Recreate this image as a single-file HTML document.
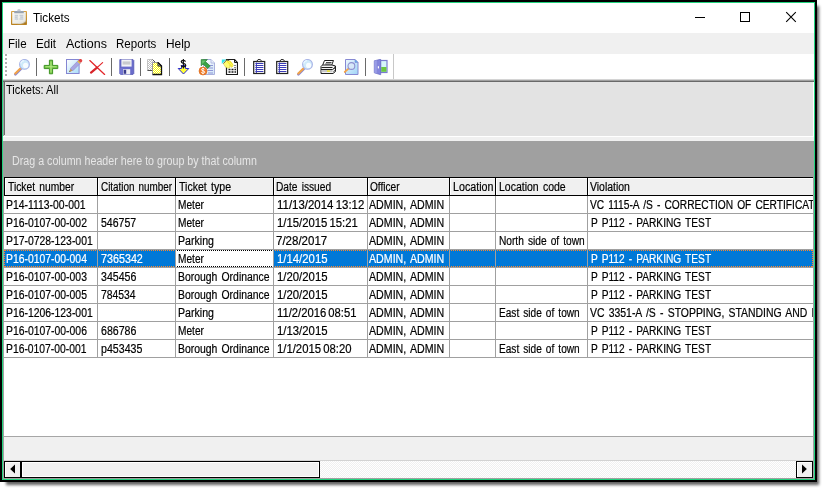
<!DOCTYPE html>
<html>
<head>
<meta charset="utf-8">
<title>Tickets</title>
<style>
html,body{margin:0;padding:0;background:#fff;}
body{width:825px;height:490px;position:relative;overflow:hidden;font-family:"Liberation Sans",sans-serif;font-size:12px;color:#000;}
.abs{position:absolute;}
#shadow{left:6px;top:6px;width:813px;height:479px;background:rgba(0,0,0,.62);filter:blur(1.7px);}
#win{left:0;top:0;width:817px;height:482px;background:#000;}
#green{left:2px;top:2px;width:813px;height:478px;background:#22d47f;}
#inner{left:3px;top:3px;width:811px;height:476px;background:#f0f0f0;overflow:hidden;}
/* coordinates inside #inner are offset by (3,3) */
#title{left:0;top:0;width:811px;height:30px;background:#fff;}
#title .t{left:29.500px;top:7px;font-size:12px;line-height:16px;transform-origin:0 50%;transform:scaleX(.975);}
#menu{left:0;top:30px;width:811px;height:21px;background:#f0f0f0;}
#menu span{position:absolute;top:4px;line-height:15px;font-size:12px;transform-origin:0 50%;white-space:nowrap;}
#tb{left:0;top:51px;width:811px;height:25px;background:#fff;}
#tbl1{left:0;top:76px;width:811px;height:1px;background:#d4d4d4;}
#tbl2{left:0;top:77px;width:811px;height:1px;background:#a0a0a0;}
#tbl3{left:0;top:78px;width:811px;height:1px;background:#696969;}
.sep{position:absolute;top:4px;width:1px;height:18px;background:#6a6a6a;}
.ico{position:absolute;top:6px;width:16px;height:16px;}
#panel{left:2px;top:79px;width:807px;height:53px;background:#e3e3e3;}
#pl1{left:0;top:79px;width:1px;height:54px;background:#a0a0a0;}
#pl2{left:1px;top:79px;width:1px;height:53px;background:#696969;}
#pb1{left:1px;top:132px;width:810px;height:1px;background:#e3e3e3;}
#pb2{left:0;top:133px;width:811px;height:1px;background:#fff;}
#pr1{left:809px;top:79px;width:1px;height:54px;background:#e3e3e3;}
#pr2{left:810px;top:79px;width:1px;height:55px;background:#fff;}
#group{left:0;top:138px;width:811px;height:36px;background:#a0a0a0;}
#group span{position:absolute;left:8.500px;top:13px;color:#e6e6e6;line-height:14px;white-space:nowrap;transform-origin:0 50%;transform:scaleX(.891);}
#grid{left:1px;top:174px;width:809px;height:259px;background:#fff;overflow:hidden;}
.hdr{position:absolute;top:0;height:17px;border:1px solid #000;background:#f0f0f0;box-shadow:inset 1px 1px 0 #fff;overflow:hidden;}
.hdr span,.c span{display:inline-block;white-space:pre;transform-origin:0 50%;transform:scaleX(.87);-webkit-text-stroke:.2px currentColor;word-spacing:1.5px;}
.hdr span{position:absolute;left:3px;top:2px;line-height:14px;}
.row{position:absolute;left:0;width:809px;height:17px;border-bottom:1px solid #a0a0a0;}
.c{position:absolute;top:0;height:17px;border-right:1px solid #a0a0a0;overflow:hidden;line-height:17px;}
.c span{position:absolute;left:3px;top:1px;line-height:16px;}
.sel .c{background:#0078d7;color:#fff;}

#lgray{left:0;top:138px;width:1px;height:338px;background:#a0a0a0;}
#rgray{left:810px;top:138px;width:1px;height:338px;background:#a0a0a0;}
#bgray{left:0;top:475px;width:811px;height:1px;background:#a0a0a0;}
#gline{left:1px;top:433px;width:809px;height:1px;background:#a6a6a6;}
#sline{left:1px;top:457px;width:809px;height:1px;background:#d2d2d2;}
#sb{left:1px;top:458px;width:809px;height:17px;background:conic-gradient(#fff 25%,#f0f0f0 0 50%,#fff 0 75%,#f0f0f0 0) 0 0/2px 2px;}
.sbb{position:absolute;top:0;width:15px;height:15px;border:1px solid #000;background:#f0f0f0;box-shadow:inset 1px 1px 0 #fff;}
.sbb svg{position:absolute;left:0;top:0;}
#thumb{position:absolute;left:17px;top:0;width:297px;height:15px;border:1px solid #000;background:#f0f0f0;box-shadow:inset 1px 1px 0 #fff,inset -1px -1px 0 #fff;}
.dot{position:absolute;height:1px;background:repeating-linear-gradient(90deg,#0078d7 0 1px,#ff8728 1px 2px);}
.dotk{position:absolute;height:1px;background:repeating-linear-gradient(90deg,#fff 0 1px,#000 1px 2px);}
.dotv{position:absolute;width:1px;background:repeating-linear-gradient(180deg,#ff8728 0 1px,#0078d7 1px 2px);}
.sel .c.foc{background:#fff;color:#000;}
</style>
</head>
<body>
<div id="shadow" class="abs"></div>
<div id="win" class="abs"></div>
<div id="green" class="abs"></div>
<div id="inner" class="abs">
  <div id="title" class="abs">
    <svg class="abs" style="left:690px;top:6px" width="112" height="16" viewBox="0 0 112 16">
      <path d="M2 8.500h10" stroke="#000" stroke-width="1"/>
      <rect x="47.500" y="3.500" width="9" height="9" fill="none" stroke="#000" stroke-width="1"/>
      <path d="M93.200 3.200l9.600 9.600M102.800 3.200l-9.600 9.600" stroke="#000" stroke-width="1.100"/>
    </svg>
    <svg class="abs" style="left:7px;top:5px" width="18" height="18" viewBox="0 0 18 18">
      <defs><linearGradient id="cbg" x1="0" y1="0" x2="0" y2="1"><stop offset="0" stop-color="#d9a548"/><stop offset="1" stop-color="#b8801e"/></linearGradient>
      <linearGradient id="cpg" x1="0" y1="0" x2="1" y2="1"><stop offset="0" stop-color="#fafaf7"/><stop offset="1" stop-color="#e4e4de"/></linearGradient></defs>
      <rect x="1" y="3" width="16" height="14" rx=".8" fill="url(#cbg)"/>
      <path d="M2.200 4h13.600v9.500c-1.500 1.600-4.500 2.300-7 2.300h-6.600z" fill="url(#cpg)"/>
      <path d="M15.800 12.200c-1.500 1.800-4.500 2.800-8.300 3.600 3.500.6 6.800-.2 8.300-1.800z" fill="#fff" stroke="#c9c6b8" stroke-width=".3"/>
      <path d="M8.300 15.800c3-.3 6-.9 7.500-3.600v3.600z" fill="#8c6418" opacity=".55"/>
      <rect x="4.200" y="3" width="9.600" height="2.300" rx=".6" fill="#98a3b0"/>
      <path d="M7.200 3.200c0-1.400.6-2.200 1.800-2.200s1.800.8 1.800 2.200z" fill="#c3cad4"/>
      <path d="M4.700 7.500h3.400M4.700 9.200h3M4.700 11h3.400M9.500 7.500h3.800M9.500 11h3.800M10.200 9.200h3" stroke="#c6ced6" stroke-width="1.400"/>
    </svg>
    <div class="abs t">Tickets</div>
  </div>
  <div id="menu" class="abs">
    <span style="left:5.300px;transform:scaleX(.96)">File</span><span style="left:32.600px;transform:scaleX(.97)">Edit</span><span style="left:63px;transform:scaleX(1.04)">Actions</span><span style="left:113.200px;transform:scaleX(.96)">Reports</span><span style="left:163.200px;transform:scaleX(.99)">Help</span>
  </div>
  <div id="tb" class="abs">
<div class="abs" style="left:2px;top:0px;width:2px;height:2px;background:#b0b0b0"></div>
<div class="abs" style="left:2px;top:4px;width:2px;height:2px;background:#b0b0b0"></div>
<div class="abs" style="left:2px;top:8px;width:2px;height:2px;background:#b0b0b0"></div>
<div class="abs" style="left:2px;top:12px;width:2px;height:2px;background:#b0b0b0"></div>
<div class="abs" style="left:2px;top:16px;width:2px;height:2px;background:#b0b0b0"></div>
<div class="abs" style="left:2px;top:20px;width:2px;height:2px;background:#b0b0b0"></div>
<div class="sep" style="left:33px"></div>
<div class="sep" style="left:108px"></div>
<div class="sep" style="left:137px"></div>
<div class="sep" style="left:166px"></div>
<div class="sep" style="left:241px"></div>
<div class="sep" style="left:362px"></div>
<svg class="abs" style="left:11px;top:5px" width="17" height="17" viewBox="0 0 17 17"><line x1="1.4" y1="15.3" x2="6.6" y2="10.1" stroke="#8a88d0" stroke-width="2.6" stroke-linecap="round"/>
<line x1="1.3" y1="14.6" x2="6.4" y2="9.5" stroke="#f3a348" stroke-width="2.1" stroke-linecap="round"/>
<circle cx="10.5" cy="5.4" r="4.9" fill="#cfeafa" stroke="#a9b4e6" stroke-width="1.1"/>
<circle cx="11.6" cy="6.4" r="2.6" fill="#ffffff" opacity=".85"/>
<path d="M6.6 4.6a4 4 0 0 1 3.4-3" stroke="#e8f6ff" stroke-width="1.2" fill="none"/></svg>
<svg class="abs" style="left:40px;top:5px" width="17" height="17" viewBox="0 0 17 17"><path d="M6.4 1.2h3.2v5.2h5.2v3.2h-5.2v5.2h-3.2v-5.2h-5.2v-3.2h5.2z" fill="#6fc13f" stroke="#3f9423" stroke-width="1" stroke-linejoin="round"/>
<path d="M8 2.4v11.2M2.4 7.7h11.2" stroke="#b4ea86" stroke-width="1.1" fill="none"/></svg>
<svg class="abs" style="left:63px;top:5px" width="17" height="17" viewBox="0 0 17 17"><defs><linearGradient id="eg" x1="0" y1="0" x2="1" y2="1"><stop offset="0" stop-color="#ffffff"/><stop offset="1" stop-color="#a8dcf8"/></linearGradient></defs>
<rect x="0.5" y="0.5" width="12.6" height="14" fill="url(#eg)" stroke="#8486d2" stroke-width="1"/>
<path d="M3.2 13l1.2-3.6 2.4 2.4z" fill="#c49a58"/>
<path d="M4.4 9.4l7.8-7.8 2.4 2.4-7.8 7.8z" fill="#a9a6e2" stroke="#7f7cc4" stroke-width=".5"/>
<path d="M11.4 2.4l.8-.8 2.4 2.4-.8.8z" fill="#f2c62a"/>
<path d="M12.4 1.4l.9-.9a1.6 1.6 0 0 1 2.4 2.4l-.9.9z" fill="#e24444"/>
<path d="M3.2 13l.5-1.4.9.9z" fill="#5a4a2a"/></svg>
<svg class="abs" style="left:86px;top:5px" width="17" height="17" viewBox="0 0 17 17"><line x1=".8" y1="1.6" x2="15.6" y2="15.4" stroke="#e3262a" stroke-width="1.3" stroke-linecap="round"/>
<line x1="13.6" y1="3.6" x2="8" y2="8.6" stroke="#e3262a" stroke-width="1.2" stroke-linecap="round"/>
<line x1="8" y1="8.6" x2="2" y2="13.6" stroke="#d8242a" stroke-width="2.2" stroke-linecap="round"/></svg>
<svg class="abs" style="left:115px;top:5px" width="17" height="17" viewBox="0 0 17 17"><path d="M1.8 0.6h13.2l.8.8v13.2l-.8.8H2.6l-.8-.8z" fill="#6a6ccb" stroke="#5658b4" stroke-width=".8"/>
<rect x="3.4" y="0.6" width="10.2" height="7" fill="#f4f4f6"/>
<rect x="4.6" y="2.4" width="7.8" height="3.2" fill="#c9cace"/>
<rect x="5" y="10.2" width="7.2" height="5.2" fill="#f2f2f6"/>
<rect x="5.6" y="10.8" width="2.6" height="4" fill="#3a3c8c"/>
<path d="M1.8 9l3-0v6.4h-2.2l-.8-.8z" fill="#7c7ed6" opacity=".6"/></svg>
<svg class="abs" style="left:143px;top:5px" width="17" height="17" viewBox="0 0 17 17"><defs><pattern id="dg" width="2" height="2" patternUnits="userSpaceOnUse"><rect width="2" height="2" fill="#fff"/><rect width="1" height="1" fill="#c0c0c0"/><rect x="1" y="1" width="1" height="1" fill="#c0c0c0"/></pattern>
<pattern id="dy" width="2" height="2" patternUnits="userSpaceOnUse"><rect width="2" height="2" fill="#fff"/><rect width="1" height="1" fill="#ffff00"/><rect x="1" y="1" width="1" height="1" fill="#ffff00"/></pattern></defs>
<path d="M1.500 .500h5l3 3v8h-8z" fill="url(#dg)"/>
<path d="M1.500 11.500v-11h5" fill="none" stroke="#c4c4c4" stroke-width="1"/>
<path d="M6.500 .500l3 3v8h-8" fill="none" stroke="#505050" stroke-width="1"/>
<path d="M6.500 3.500h5.500l3.500 3.500v8.500h-9z" fill="url(#dy)"/>
<path d="M6.500 15.500v-12h5.500" fill="none" stroke="#9a9a9a" stroke-width="1"/>
<path d="M12 3.500v3.500h3.500z" fill="#fff" stroke="#111" stroke-width="1" stroke-linejoin="round"/>
<path d="M12 3.500l3.500 3.500v8.500h-9" fill="none" stroke="#111" stroke-width="1.300"/></svg>
<svg class="abs" style="left:172px;top:5px" width="17" height="17" viewBox="0 0 17 17"><path d="M6.500 6.500h4v3h3.300l-5.300 5.500-5.300-5.500h3.300z" fill="#ffff38" stroke="#2a2ad0" stroke-width="1" stroke-linejoin="miter"/>
<path d="M10.500 2.600c-.3-.9-1.100-1.300-2.100-1.300-1.200 0-2.100.6-2.100 1.500 0 2.200 4.400 1.100 4.400 3.400 0 1-1 1.600-2.300 1.600-1.100 0-2-.5-2.300-1.400" fill="none" stroke="#111" stroke-width="1.300"/>
<path d="M8.400 0v9.500" stroke="#111" stroke-width="1.100"/></svg>
<svg class="abs" style="left:195px;top:5px" width="17" height="17" viewBox="0 0 17 17"><defs><linearGradient id="dsg" x1="0" y1="0" x2="1" y2="1"><stop offset="0" stop-color="#ffffff"/><stop offset="1" stop-color="#cfe4f8"/></linearGradient></defs>
<path d="M5.500 .5h7.500l3.500 3.500v11.500h-11z" fill="url(#dsg)" stroke="#a9b0dc" stroke-width="1"/>
<path d="M13 .5v3.500h3.500" fill="#e8f0fc" stroke="#a9b0dc" stroke-width=".8"/>
<path d="M9 6.500h6M9 9h6M9.500 11.500h5.500M10 14h5" stroke="#8d96d6" stroke-width="1.100"/>
<path d="M3.200 .6h6.200l-2 2 4.800 4.400-2.600 2.600-4.600-4.600-1.800 1.800z" fill="#3aa346" stroke="#2b7d36" stroke-width=".7"/>
<path d="M4.200 1.400h3.600l-3.600 3.600z" fill="#7ed27e" opacity=".7"/>
<circle cx="5" cy="12" r="4" fill="#ef7b28" stroke="#d96a1c" stroke-width=".6"/>
<path d="M6.600 10.400c-.3-.7-.9-.9-1.600-.9-.9 0-1.500.5-1.500 1.200 0 1.600 3.200.8 3.200 2.400 0 .8-.7 1.200-1.700 1.200-.8 0-1.500-.3-1.700-1" fill="none" stroke="#fff" stroke-width="1"/>
<path d="M5 8.800v6.400" stroke="#fff" stroke-width=".8"/></svg>
<svg class="abs" style="left:218px;top:5px" width="17" height="17" viewBox="0 0 17 17"><path d="M5.500 .5h8l3 3v12h-11z" fill="#fff" stroke="#1a1a1a" stroke-width="1.200"/>
<path d="M13.500 .5v3h3" fill="none" stroke="#1a1a1a" stroke-width="1"/>
<path d="M7.500 10.500h2M10.500 10.500h2M13.500 10.500h1.500M7.500 13h2M10.500 13h2M13.500 13h1.500" stroke="#1a1a1a" stroke-width="1.300"/>
<path d="M13.500 6.500h1M13.500 8.500h1" stroke="#1a1a1a" stroke-width="1"/>
<path d="M.8 .4h4.400l-4.400 4.600z" fill="#2ee6ee"/>
<path d="M2.400 4.600l3.200-3.600 2.600.6 4.200 5-1.600 1.800-2.200-2 .4 2.400-2.200.4-2.600-1.400z" fill="#fffb70" stroke="#c9c43a" stroke-width=".5"/>
<path d="M6.200 2.200l5 5.600M8.600 1.800l3.400 4" stroke="#f4e82e" stroke-width="1.200"/>
<path d="M2.400 4.600l3.200-3.600 2.600.6" fill="none" stroke="#3a3a3a" stroke-width=".7"/></svg>
<svg class="abs" style="left:248px;top:5px" width="17" height="17" viewBox="0 0 17 17"><rect x="2.700" y="2.500" width="11" height="12" fill="#fff" stroke="#222" stroke-width="1.200"/>
<path d="M5.600 2.600l1.400-2h2.400l1.400 2z" fill="#fff" stroke="#222" stroke-width="1"/>
<path d="M5.400 3.500v10.500" stroke="#3b3bb8" stroke-width="1"/>
<path d="M4.400 4.500h8M4.400 6.500h8M4.400 8.500h8M4.400 10.500h8M4.400 12.500h8" stroke="#3b3bb8" stroke-width="1.100"/></svg>
<svg class="abs" style="left:271px;top:5px" width="17" height="17" viewBox="0 0 17 17"><rect x="2.700" y="2.500" width="11" height="12" fill="#fff" stroke="#222" stroke-width="1.200"/>
<path d="M5.600 2.600l1.400-2h2.400l1.400 2z" fill="#fff" stroke="#222" stroke-width="1"/>
<path d="M5.400 3.500v10.500" stroke="#3b3bb8" stroke-width="1"/>
<path d="M4.400 4.500h8M4.400 6.500h8M4.400 8.500h8M4.400 10.500h8M4.400 12.500h8" stroke="#3b3bb8" stroke-width="1.100"/></svg>
<svg class="abs" style="left:294px;top:5px" width="17" height="17" viewBox="0 0 17 17"><line x1="1.4" y1="15.3" x2="6.6" y2="10.1" stroke="#8a88d0" stroke-width="2.6" stroke-linecap="round"/>
<line x1="1.3" y1="14.6" x2="6.4" y2="9.5" stroke="#f3a348" stroke-width="2.1" stroke-linecap="round"/>
<circle cx="10.5" cy="5.4" r="4.9" fill="#cfeafa" stroke="#a9b4e6" stroke-width="1.1"/>
<circle cx="11.6" cy="6.4" r="2.6" fill="#ffffff" opacity=".85"/>
<path d="M6.6 4.6a4 4 0 0 1 3.4-3" stroke="#e8f6ff" stroke-width="1.2" fill="none"/></svg>
<svg class="abs" style="left:317px;top:5px" width="17" height="17" viewBox="0 0 17 17"><path d="M4.500 1.500h9l-2 5h-9z" fill="#fff" stroke="#222" stroke-width="1"/>
<path d="M6 3.500h5.500M5.200 5h5.500" stroke="#333" stroke-width=".9"/>
<path d="M1 7.500l1.500-1.500h9.500l3.500 1v5.500l-2.500 2h-12z" fill="#f2f2f2" stroke="#222" stroke-width="1"/>
<path d="M1 10.500h11.500l3-2" fill="none" stroke="#222" stroke-width="1"/>
<path d="M1.500 8.500h11" stroke="#222" stroke-width="1"/>
<rect x="1.500" y="11" width="11" height="2" fill="#c9c9c9"/>
<rect x="7" y="11.400" width="3" height="1.300" fill="#f4e812"/>
<path d="M1.500 14.500h11" stroke="#222" stroke-width="1"/>
<path d="M13.500 6.500l1 .5M13.500 9.500l1.500-1M13.500 12.500l1.500-1" stroke="#222" stroke-width=".9"/></svg>
<svg class="abs" style="left:340px;top:5px" width="17" height="17" viewBox="0 0 17 17"><defs><linearGradient id="pg" x1="0" y1="0" x2="1" y2="1"><stop offset="0" stop-color="#eef8ff"/><stop offset="1" stop-color="#9fd4f6"/></linearGradient></defs>
<path d="M2.500 .5h9.500l3 3v12h-12.500z" fill="url(#pg)" stroke="#8688d2" stroke-width="1"/>
<path d="M12 .5v3h3z" fill="#58b6f0" stroke="#8688d2" stroke-width=".6"/>
<line x1="1.700" y1="13" x2="5.800" y2="9.400" stroke="#f3a348" stroke-width="1.700" stroke-linecap="round"/>
<circle cx="8.400" cy="7" r="3.400" fill="#dbe8f8" fill-opacity=".75" stroke="#8f8fd0" stroke-width="1.100"/></svg>
<svg class="abs" style="left:369px;top:5px" width="17" height="17" viewBox="0 0 17 17"><rect x="8.500" y="1.500" width="6.500" height="12" fill="#d6f6fa" stroke="#7a7cd0" stroke-width="1.200"/>
<rect x="9.200" y="8" width="5.200" height="4.800" fill="#6cc840"/>
<path d="M2.300 1.800l6.400-1.500v15.400l-6.400-1.900z" fill="#8486dc" stroke="#6c6ec8" stroke-width=".8"/>
<path d="M2.300 1.800l2.500-.6v13.300l-2.500-.7z" fill="#a4a6ea" opacity=".7"/>
<rect x="5.800" y="7.200" width="1.200" height="2.200" fill="#fff"/></svg>
<div class="abs" style="left:390px;top:0;width:1px;height:25px;background:#c8c8c8"></div>
</div>
  <div id="tbl1" class="abs"></div><div id="tbl2" class="abs"></div><div id="tbl3" class="abs"></div>
  <div id="pl1" class="abs"></div><div id="pl2" class="abs"></div><div id="pb1" class="abs"></div><div id="pb2" class="abs"></div><div id="pr1" class="abs"></div><div id="pr2" class="abs"></div>
  <div id="panel" class="abs"><span class="abs" style="left:1.400px;top:1px;line-height:14px;white-space:nowrap;transform-origin:0 50%;transform:scaleX(.92)">Tickets: All</span></div>
  <div id="group" class="abs"><span>Drag a column header here to group by that column</span></div>
  <div id="lgray" class="abs"></div><div id="rgray" class="abs"></div><div id="bgray" class="abs"></div>
  <div id="gline" class="abs"></div><div id="sline" class="abs"></div>
  <div id="sb" class="abs">
    <div class="sbb" style="left:0"><svg width="15" height="15" viewBox="0 0 15 15"><path d="M10 2.500v9l-4.800-4.500z" fill="#000"/></svg></div>
    <div id="thumb"></div>
    <div class="sbb" style="left:792px"><svg width="15" height="15" viewBox="0 0 15 15"><path d="M5 2.500v9l4.800-4.500z" fill="#000"/></svg></div>
  </div>
  <div id="grid" class="abs">
<div class="hdr" style="left:0px;width:92px"><span style="left:2.80px;transform:scaleX(0.8579)">Ticket number</span></div>
<div class="hdr" style="left:93px;width:77px"><span style="left:2.80px;transform:scaleX(0.8245)">Citation number</span></div>
<div class="hdr" style="left:171px;width:97px"><span style="left:2.80px;transform:scaleX(0.8811)">Ticket type</span></div>
<div class="hdr" style="left:269px;width:93px"><span style="left:2.00px;transform:scaleX(0.8493)">Date issued</span></div>
<div class="hdr" style="left:363px;width:81px"><span style="left:2.00px;transform:scaleX(0.8430)">Officer</span></div>
<div class="hdr" style="left:445px;width:45px"><span style="left:2.80px;transform:scaleX(0.8903)">Location</span></div>
<div class="hdr" style="left:491px;width:91px"><span style="left:2.80px;transform:scaleX(0.8748)">Location code</span></div>
<div class="hdr" style="left:583px;width:225px"><span style="left:2.00px;transform:scaleX(0.8716)">Violation</span></div>
<div class="row" style="top:19px">
<div class="c" style="left:0px;width:93px"><span style="left:2.00px;transform:scaleX(0.8677)">P14-1113-00-001</span></div>
<div class="c" style="left:94px;width:77px"></div>
<div class="c" style="left:172px;width:97px"><span style="left:2.00px;transform:scaleX(0.8436)">Meter</span></div>
<div class="c" style="left:270px;width:93px"><span style="word-spacing:-1px;left:2.64px;transform:scaleX(0.9536)">11/13/2014 13:12</span></div>
<div class="c" style="left:364px;width:81px"><span style="left:1.20px;transform:scaleX(0.8872)">ADMIN, ADMIN</span></div>
<div class="c" style="left:446px;width:45px"></div>
<div class="c" style="left:492px;width:91px"></div>
<div class="c" style="left:584px;width:225px"><span style="left:2.00px;transform:scaleX(0.8501)">VC 1115-A /S - CORRECTION OF CERTIFICATE</span></div>
</div>
<div class="row" style="top:37px">
<div class="c" style="left:0px;width:93px"><span style="left:2.00px;transform:scaleX(0.8663)">P16-0107-00-002</span></div>
<div class="c" style="left:94px;width:77px"><span style="left:2.80px;transform:scaleX(0.8758)">546757</span></div>
<div class="c" style="left:172px;width:97px"><span style="left:2.00px;transform:scaleX(0.8436)">Meter</span></div>
<div class="c" style="left:270px;width:93px"><span style="word-spacing:-1px;left:2.64px;transform:scaleX(0.9425)">1/15/2015 15:21</span></div>
<div class="c" style="left:364px;width:81px"><span style="left:1.20px;transform:scaleX(0.8872)">ADMIN, ADMIN</span></div>
<div class="c" style="left:446px;width:45px"></div>
<div class="c" style="left:492px;width:91px"></div>
<div class="c" style="left:584px;width:225px"><span style="left:2.80px;transform:scaleX(0.8467)">P P112 - PARKING TEST</span></div>
</div>
<div class="row" style="top:55px">
<div class="c" style="left:0px;width:93px"><span style="left:2.00px;transform:scaleX(0.8665)">P17-0728-123-001</span></div>
<div class="c" style="left:94px;width:77px"></div>
<div class="c" style="left:172px;width:97px"><span style="left:2.00px;transform:scaleX(0.8842)">Parking</span></div>
<div class="c" style="left:270px;width:93px"><span style="word-spacing:-1px;left:2.00px;transform:scaleX(0.9596)">7/28/2017</span></div>
<div class="c" style="left:364px;width:81px"><span style="left:1.20px;transform:scaleX(0.8872)">ADMIN, ADMIN</span></div>
<div class="c" style="left:446px;width:45px"></div>
<div class="c" style="left:492px;width:91px"><span style="left:2.80px;transform:scaleX(0.8462)">North side of town</span></div>
<div class="c" style="left:584px;width:225px"></div>
</div>
<div class="row sel" style="top:73px">
<div class="c" style="left:0px;width:93px"><span style="left:2.00px;transform:scaleX(0.8663)">P16-0107-00-004</span></div>
<div class="c" style="left:94px;width:77px"><span style="left:2.80px;transform:scaleX(0.8956)">7365342</span></div>
<div class="c foc" style="left:172px;width:97px"><span style="left:2.00px;transform:scaleX(0.8436)">Meter</span></div>
<div class="c" style="left:270px;width:93px"><span style="word-spacing:-1px;left:2.64px;transform:scaleX(0.9470)">1/14/2015</span></div>
<div class="c" style="left:364px;width:81px"><span style="left:1.20px;transform:scaleX(0.8872)">ADMIN, ADMIN</span></div>
<div class="c" style="left:446px;width:45px"></div>
<div class="c" style="left:492px;width:91px"></div>
<div class="c" style="left:584px;width:225px"><span style="left:2.80px;transform:scaleX(0.8467)">P P112 - PARKING TEST</span></div>
</div>
<div class="row" style="top:91px">
<div class="c" style="left:0px;width:93px"><span style="left:2.00px;transform:scaleX(0.8663)">P16-0107-00-003</span></div>
<div class="c" style="left:94px;width:77px"><span style="left:2.80px;transform:scaleX(0.8839)">345456</span></div>
<div class="c" style="left:172px;width:97px"><span style="left:2.00px;transform:scaleX(0.8671)">Borough Ordinance</span></div>
<div class="c" style="left:270px;width:93px"><span style="word-spacing:-1px;left:2.64px;transform:scaleX(0.9470)">1/20/2015</span></div>
<div class="c" style="left:364px;width:81px"><span style="left:1.20px;transform:scaleX(0.8872)">ADMIN, ADMIN</span></div>
<div class="c" style="left:446px;width:45px"></div>
<div class="c" style="left:492px;width:91px"></div>
<div class="c" style="left:584px;width:225px"><span style="left:2.80px;transform:scaleX(0.8467)">P P112 - PARKING TEST</span></div>
</div>
<div class="row" style="top:109px">
<div class="c" style="left:0px;width:93px"><span style="left:2.00px;transform:scaleX(0.8663)">P16-0107-00-005</span></div>
<div class="c" style="left:94px;width:77px"><span style="left:2.80px;transform:scaleX(0.8642)">784534</span></div>
<div class="c" style="left:172px;width:97px"><span style="left:2.00px;transform:scaleX(0.8671)">Borough Ordinance</span></div>
<div class="c" style="left:270px;width:93px"><span style="word-spacing:-1px;left:2.64px;transform:scaleX(0.9470)">1/20/2015</span></div>
<div class="c" style="left:364px;width:81px"><span style="left:1.20px;transform:scaleX(0.8872)">ADMIN, ADMIN</span></div>
<div class="c" style="left:446px;width:45px"></div>
<div class="c" style="left:492px;width:91px"></div>
<div class="c" style="left:584px;width:225px"><span style="left:2.80px;transform:scaleX(0.8467)">P P112 - PARKING TEST</span></div>
</div>
<div class="row" style="top:127px">
<div class="c" style="left:0px;width:93px"><span style="left:2.00px;transform:scaleX(0.8665)">P16-1206-123-001</span></div>
<div class="c" style="left:94px;width:77px"></div>
<div class="c" style="left:172px;width:97px"><span style="left:2.00px;transform:scaleX(0.8842)">Parking</span></div>
<div class="c" style="left:270px;width:93px"><span style="word-spacing:-1px;left:2.64px;transform:scaleX(0.9367)">11/2/2016 08:51</span></div>
<div class="c" style="left:364px;width:81px"><span style="left:1.20px;transform:scaleX(0.8872)">ADMIN, ADMIN</span></div>
<div class="c" style="left:446px;width:45px"></div>
<div class="c" style="left:492px;width:91px"><span style="left:2.80px;transform:scaleX(0.8416)">East side of town</span></div>
<div class="c" style="left:584px;width:225px"><span style="left:2.00px;transform:scaleX(0.8692)">VC 3351-A /S - STOPPING, STANDING AND PARKING</span></div>
</div>
<div class="row" style="top:145px">
<div class="c" style="left:0px;width:93px"><span style="left:2.00px;transform:scaleX(0.8663)">P16-0107-00-006</span></div>
<div class="c" style="left:94px;width:77px"><span style="left:2.80px;transform:scaleX(0.8839)">686786</span></div>
<div class="c" style="left:172px;width:97px"><span style="left:2.00px;transform:scaleX(0.8436)">Meter</span></div>
<div class="c" style="left:270px;width:93px"><span style="word-spacing:-1px;left:2.64px;transform:scaleX(0.9470)">1/13/2015</span></div>
<div class="c" style="left:364px;width:81px"><span style="left:1.20px;transform:scaleX(0.8872)">ADMIN, ADMIN</span></div>
<div class="c" style="left:446px;width:45px"></div>
<div class="c" style="left:492px;width:91px"></div>
<div class="c" style="left:584px;width:225px"><span style="left:2.80px;transform:scaleX(0.8467)">P P112 - PARKING TEST</span></div>
</div>
<div class="row" style="top:163px">
<div class="c" style="left:0px;width:93px"><span style="left:2.00px;transform:scaleX(0.8607)">P16-0107-00-001</span></div>
<div class="c" style="left:94px;width:77px"><span style="left:2.80px;transform:scaleX(0.8861)">p453435</span></div>
<div class="c" style="left:172px;width:97px"><span style="left:2.00px;transform:scaleX(0.8671)">Borough Ordinance</span></div>
<div class="c" style="left:270px;width:93px"><span style="word-spacing:-1px;left:2.64px;transform:scaleX(0.9420)">1/1/2015 08:20</span></div>
<div class="c" style="left:364px;width:81px"><span style="left:1.20px;transform:scaleX(0.8872)">ADMIN, ADMIN</span></div>
<div class="c" style="left:446px;width:45px"></div>
<div class="c" style="left:492px;width:91px"><span style="left:2.80px;transform:scaleX(0.8416)">East side of town</span></div>
<div class="c" style="left:584px;width:225px"><span style="left:2.80px;transform:scaleX(0.8467)">P P112 - PARKING TEST</span></div>
</div>
<div class="dot" style="left:0;top:73px;width:809px"></div><div class="dot" style="left:0;top:89px;width:809px"></div>
<div class="dotv" style="left:0;top:73px;height:17px"></div><div class="dotv" style="left:808px;top:73px;height:17px"></div>
<div class="dotk" style="left:172px;top:73px;width:97px"></div><div class="dotk" style="left:172px;top:89px;width:97px"></div>
<div class="abs" style="left:93px;top:73px;width:1px;height:17px;background:#a0a0a0"></div>
<div class="abs" style="left:171px;top:73px;width:1px;height:17px;background:#a0a0a0"></div>
<div class="abs" style="left:269px;top:73px;width:1px;height:17px;background:#a0a0a0"></div>
<div class="abs" style="left:363px;top:73px;width:1px;height:17px;background:#a0a0a0"></div>
<div class="abs" style="left:445px;top:73px;width:1px;height:17px;background:#a0a0a0"></div>
<div class="abs" style="left:491px;top:73px;width:1px;height:17px;background:#a0a0a0"></div>
<div class="abs" style="left:583px;top:73px;width:1px;height:17px;background:#a0a0a0"></div>
</div>
</div>
</body>
</html>
